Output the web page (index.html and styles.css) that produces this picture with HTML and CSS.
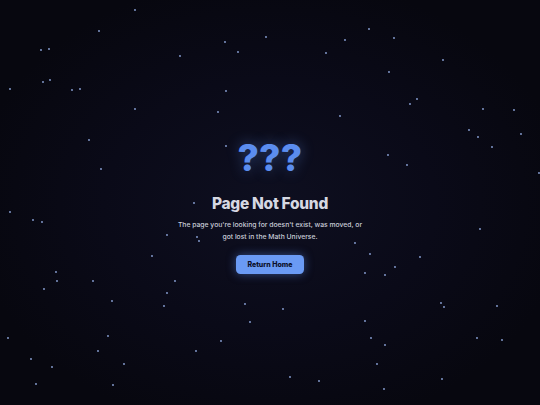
FILE: index.html
```html
<!DOCTYPE html>
<html lang="en">
<head>
<meta charset="utf-8">
<title>Page Not Found</title>
<link rel="stylesheet" href="styles.css">
</head>
<body>
<div class="sky">
  <svg class="stars" width="540" height="405" viewBox="0 0 540 405" aria-hidden="true">
    <g fill="#8ea6dc">
      <circle cx="135" cy="10" r="0.9"/><circle cx="99" cy="31" r="0.9"/><circle cx="41" cy="50" r="0.9"/><circle cx="49" cy="49" r="0.9"/>
      <circle cx="43" cy="82" r="0.9"/><circle cx="50" cy="80" r="0.9"/><circle cx="10" cy="89" r="0.9"/><circle cx="72" cy="90" r="0.9"/>
      <circle cx="80" cy="89" r="0.9"/><circle cx="135" cy="109" r="0.9"/><circle cx="180" cy="56" r="0.9"/>
      <circle cx="225" cy="42" r="0.9"/><circle cx="238" cy="52" r="0.9"/><circle cx="266" cy="37" r="0.9"/><circle cx="326" cy="53" r="0.9"/>
      <circle cx="345" cy="40" r="0.9"/><circle cx="226" cy="91" r="0.9"/><circle cx="218" cy="112" r="0.9"/><circle cx="340" cy="116" r="0.9"/>
      <circle cx="369" cy="29" r="0.9"/><circle cx="394" cy="38" r="0.9"/><circle cx="443" cy="60" r="0.9"/><circle cx="389" cy="72" r="0.9"/>
      <circle cx="410" cy="104" r="0.9"/><circle cx="417" cy="99" r="0.9"/><circle cx="483" cy="109" r="0.9"/><circle cx="514" cy="110" r="0.9"/>
      <circle cx="469" cy="130" r="0.9"/><circle cx="521" cy="134" r="0.9"/>
      <circle cx="89" cy="140" r="0.9"/><circle cx="101" cy="169" r="0.9"/><circle cx="10" cy="212" r="0.9"/><circle cx="33" cy="220" r="0.9"/>
      <circle cx="42" cy="222" r="0.9"/><circle cx="194" cy="203" r="0.9"/><circle cx="167" cy="235" r="0.9"/><circle cx="197" cy="237" r="0.9"/>
      <circle cx="199" cy="241" r="0.9"/><circle cx="152" cy="256" r="0.9"/><circle cx="226" cy="146" r="0.9"/>
      <circle cx="478" cy="137" r="0.9"/><circle cx="492" cy="147" r="0.9"/><circle cx="388" cy="155" r="0.9"/><circle cx="407" cy="165" r="0.9"/>
      <circle cx="355" cy="243" r="0.9"/><circle cx="370" cy="254" r="0.9"/><circle cx="420" cy="257" r="0.9"/><circle cx="395" cy="267" r="0.9"/>
      <circle cx="480" cy="229" r="0.9"/><circle cx="539" cy="173" r="0.9"/>
      <circle cx="56" cy="272" r="0.9"/><circle cx="57" cy="281" r="0.9"/><circle cx="44" cy="289" r="0.9"/><circle cx="93" cy="281" r="0.9"/>
      <circle cx="175" cy="281" r="0.9"/><circle cx="167" cy="293" r="0.9"/><circle cx="112" cy="301" r="0.9"/><circle cx="164" cy="306" r="0.9"/>
      <circle cx="245" cy="304" r="0.9"/><circle cx="250" cy="322" r="0.9"/><circle cx="8" cy="338" r="0.9"/><circle cx="108" cy="336" r="0.9"/>
      <circle cx="31" cy="359" r="0.9"/><circle cx="98" cy="351" r="0.9"/><circle cx="52" cy="367" r="0.9"/><circle cx="124" cy="364" r="0.9"/>
      <circle cx="196" cy="351" r="0.9"/><circle cx="221" cy="341" r="0.9"/><circle cx="36" cy="384" r="0.9"/><circle cx="113" cy="385" r="0.9"/>
      <circle cx="365" cy="273" r="0.9"/><circle cx="385" cy="275" r="0.9"/><circle cx="283" cy="309" r="0.9"/><circle cx="441" cy="303" r="0.9"/>
      <circle cx="444" cy="307" r="0.9"/><circle cx="497" cy="306" r="0.9"/><circle cx="365" cy="321" r="0.9"/><circle cx="371" cy="338" r="0.9"/>
      <circle cx="385" cy="345" r="0.9"/><circle cx="377" cy="364" r="0.9"/><circle cx="477" cy="338" r="0.9"/><circle cx="502" cy="340" r="0.9"/>
      <circle cx="290" cy="377" r="0.9"/><circle cx="319" cy="381" r="0.9"/><circle cx="442" cy="379" r="0.9"/><circle cx="384" cy="389" r="0.9"/>
    </g>
  </svg>
  <main class="notfound">
    <div class="marks">???</div>
    <h1 class="title">Page Not Found</h1>
    <p class="message">The page you're looking for doesn't exist, was moved, or<br>got lost in the Math Universe.</p>
    <a class="home-btn" href="#">Return Home</a>
  </main>
</div>
</body>
</html>
```

FILE: styles.css
```css
* { box-sizing: border-box; }
html, body { margin: 0; padding: 0; }
body {
  width: 540px;
  height: 405px;
  overflow: hidden;
  background: #07070f;
  font-family: Inter, "Noto Sans", sans-serif;
}
.sky {
  position: relative;
  width: 540px;
  height: 405px;
  background: radial-gradient(ellipse 300px 230px at 270px 205px, #0e0f20 0%, #0a0a18 55%, #07070f 100%);
  display: flex;
  justify-content: center;
  align-items: flex-start;
  padding-top: 139px;
}
.stars {
  position: absolute;
  left: 0;
  top: 0;
}
.notfound {
  position: relative;
  display: flex;
  flex-direction: column;
  align-items: center;
  text-align: center;
}
.marks {
  font-size: 37px;
  font-weight: 800;
  line-height: 37px;
  color: #5b8def;
  letter-spacing: 0.3px;
  text-shadow: 0 0 14px rgba(91, 141, 239, 0.45);
}
.title {
  margin: 17.5px 0 0;
  font-size: 15.5px;
  line-height: 19px;
  font-weight: 800;
  color: #d6d8e2;
  letter-spacing: -0.3px;
}
.message {
  margin: 6.5px 0 0;
  font-size: 6.8px;
  line-height: 12px;
  font-weight: 500;
  color: #c9ccd8;
}
.home-btn {
  margin-top: 12px;
  display: flex;
  align-items: center;
  justify-content: center;
  width: 68px;
  height: 19px;
  border-radius: 4.5px;
  background: #6a9af4;
  color: #0a0f2a;
  font-size: 7px;
  font-weight: 800;
  text-decoration: none;
  box-shadow: 0 0 10px rgba(91, 141, 239, 0.5);
}
```
